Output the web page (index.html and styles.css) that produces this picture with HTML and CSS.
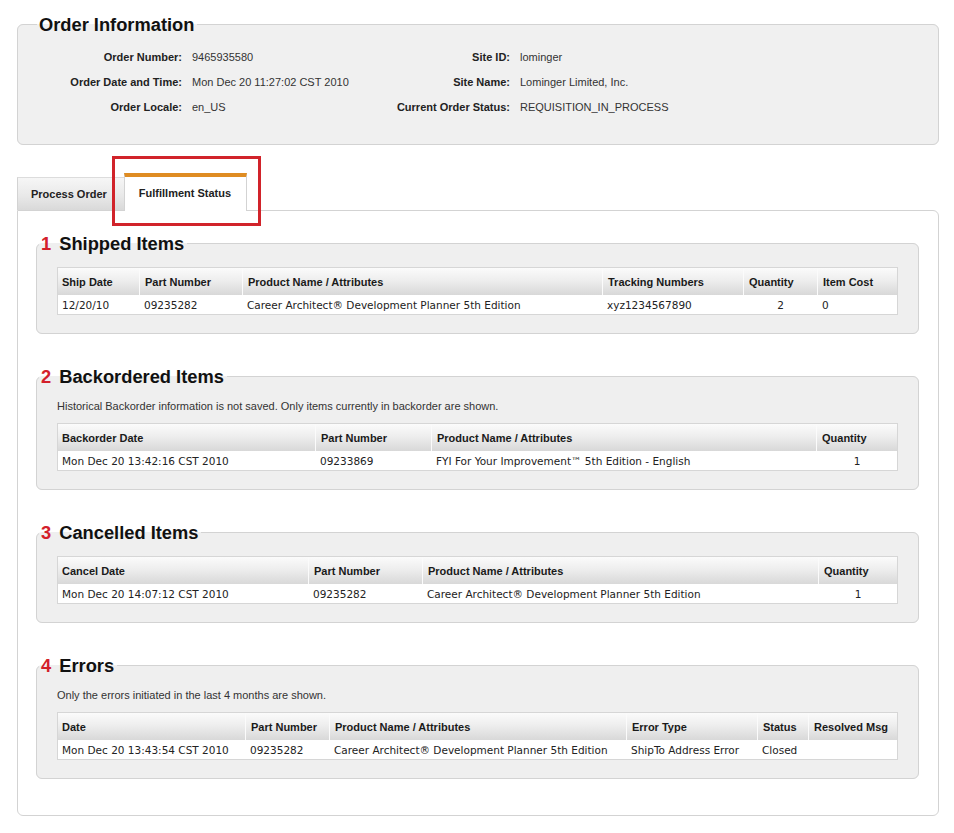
FILE: index.html
```html
<!DOCTYPE html>
<html lang="en">
<head>
<meta charset="utf-8">
<title>Order Fulfillment Status</title>
<link rel="stylesheet" href="styles.css">
</head>
<body>
<div class="page">
  <fieldset class="box order-info">
    <legend class="box-title order-title">Order Information</legend>
    <div class="info-grid">
      <div class="info-label">Order Number:</div>
      <div class="info-value">9465935580</div>
      <div class="info-label">Site ID:</div>
      <div class="info-value">lominger</div>

      <div class="info-label">Order Date and Time:</div>
      <div class="info-value">Mon Dec 20 11:27:02 CST 2010</div>
      <div class="info-label">Site Name:</div>
      <div class="info-value">Lominger Limited, Inc.</div>

      <div class="info-label">Order Locale:</div>
      <div class="info-value">en_US</div>
      <div class="info-label">Current Order Status:</div>
      <div class="info-value">REQUISITION_IN_PROCESS</div>
    </div>
  </fieldset>

  <div class="tabs">
    <div class="tab-bar">
      <div class="tab">Process Order</div>
      <div class="tab tab-active">Fulfillment Status</div>
    </div>
    <div class="annotation"></div>
    <div class="tab-panel">

      <fieldset class="box section">
        <legend class="box-title"><span class="num">1</span> Shipped Items</legend>
        <div class="section-body">
          <table class="grid t-shipped">
            <thead>
              <tr><th>Ship Date</th><th>Part Number</th><th>Product Name / Attributes</th><th>Tracking Numbers</th><th>Quantity</th><th>Item Cost</th></tr>
            </thead>
            <tbody>
              <tr><td>12/20/10</td><td>09235282</td><td>Career Architect® Development Planner 5th Edition</td><td>xyz1234567890</td><td class="qty">2</td><td>0</td></tr>
            </tbody>
          </table>
        </div>
      </fieldset>

      <fieldset class="box section">
        <legend class="box-title"><span class="num">2</span> Backordered Items</legend>
        <div class="section-body">
          <p class="note">Historical Backorder information is not saved. Only items currently in backorder are shown.</p>
          <table class="grid t-back">
            <thead>
              <tr><th>Backorder Date</th><th>Part Number</th><th>Product Name / Attributes</th><th>Quantity</th></tr>
            </thead>
            <tbody>
              <tr><td>Mon Dec 20 13:42:16 CST 2010</td><td>09233869</td><td>FYI For Your Improvement™ 5th Edition - English</td><td class="qty">1</td></tr>
            </tbody>
          </table>
        </div>
      </fieldset>

      <fieldset class="box section">
        <legend class="box-title"><span class="num">3</span> Cancelled Items</legend>
        <div class="section-body">
          <table class="grid t-cancel">
            <thead>
              <tr><th>Cancel Date</th><th>Part Number</th><th>Product Name / Attributes</th><th>Quantity</th></tr>
            </thead>
            <tbody>
              <tr><td>Mon Dec 20 14:07:12 CST 2010</td><td>09235282</td><td>Career Architect® Development Planner 5th Edition</td><td class="qty">1</td></tr>
            </tbody>
          </table>
        </div>
      </fieldset>

      <fieldset class="box section">
        <legend class="box-title"><span class="num">4</span> Errors</legend>
        <div class="section-body">
          <p class="note">Only the errors initiated in the last 4 months are shown.</p>
          <table class="grid t-errors">
            <thead>
              <tr><th>Date</th><th>Part Number</th><th>Product Name / Attributes</th><th>Error Type</th><th>Status</th><th>Resolved Msg</th></tr>
            </thead>
            <tbody>
              <tr><td>Mon Dec 20 13:43:54 CST 2010</td><td>09235282</td><td>Career Architect® Development Planner 5th Edition</td><td>ShipTo Address Error</td><td>Closed</td><td></td></tr>
            </tbody>
          </table>
        </div>
      </fieldset>

    </div>
  </div>
</div>
</body>
</html>
```

FILE: styles.css
```css
* { box-sizing: border-box; }

html, body {
  margin: 0;
  padding: 0;
  background: #ffffff;
}

body {
  font-family: "Liberation Sans", Arial, sans-serif;
  font-size: 11px;
  color: #222;
}

.page {
  padding: 14px 15px 0 17px;
  width: 954px;
}

/* Generic rounded fieldset box */
.box {
  margin: 0;
  padding: 0;
  min-width: 0;
  border: 1px solid #d3d3d3;
  border-radius: 6px;
  background: #efefef;
}

.box-title {
  font-size: 18.3px;
  font-weight: bold;
  line-height: 21px;
  color: #111;
  padding: 0 3px 0 2px;
  margin-left: 2px;
}

.order-info {
  background: #f0f0f0;
}

.order-title {
  margin-left: 19px;
}

.num {
  color: #d3202a;
  margin-right: 3px;
}

/* Order info grid */
.info-grid {
  display: grid;
  grid-template-columns: 164px 158px 150px 1fr;
  column-gap: 10px;
  padding: 10px 0 24px 0;
  line-height: 25px;
}

.info-label {
  font-weight: bold;
  text-align: right;
  color: #222;
}

.info-value {
  color: #333;
}

/* Tabs */
.tabs {
  position: relative;
  margin-top: 28px;
}

.tab-bar {
  display: flex;
  align-items: flex-end;
  height: 37px;
}

.tab {
  font-weight: bold;
  font-size: 11px;
  color: #222;
  white-space: nowrap;
}

.tab:first-child {
  height: 33px;
  line-height: 32px;
  padding: 0 17px 0 13px;
  border-top: 1px solid #dcdcdc;
  border-left: 1px solid #d3d3d3;
  background: linear-gradient(#f6f6f6, #e9e9e9 55%, #d9d9d9);
}

.tab-active {
  position: relative;
  z-index: 1;
  height: 38px;
  line-height: 33px;
  margin-bottom: -1px;
  padding: 0 15px 0 14px;
  background: #ffffff;
  border-top: 4px solid #df8c22;
  border-left: 1px solid #d3d3d3;
  border-right: 1px solid #d3d3d3;
}

.annotation {
  position: absolute;
  left: 95px;
  top: -17px;
  width: 149px;
  height: 70px;
  border: 3px solid #d1232a;
  z-index: 2;
  pointer-events: none;
}

.tab-panel {
  border: 1px solid #d3d3d3;
  border-radius: 0 6px 6px 6px;
  background: #ffffff;
  padding: 22px 19px 36px 18px;
  display: flex;
  flex-direction: column;
  gap: 32px;
}

.section-body {
  padding: 13px 20px 18px 20px;
}

.note {
  margin: 0 0 10px 0;
  line-height: 13px;
  color: #333;
}

/* Data grids */
.grid {
  width: 100%;
  table-layout: fixed;
  border-collapse: separate;
  border-spacing: 0;
  border: 1px solid #d6d6d6;
  background: #ffffff;
}

.grid th {
  height: 27px;
  padding: 0 4px 0 5px;
  text-align: left;
  font-weight: bold;
  font-size: 11px;
  color: #1a1a1a;
  white-space: nowrap;
  background: linear-gradient(#fbfbfb, #eeeeee 45%, #d8d8d8);
  border-left: 1px solid #fbfbfb;
}

.grid th:first-child {
  border-left: 0;
  padding-left: 4px;
}

.grid td {
  height: 19px;
  padding: 0 4px 0 5px;
  font-family: "DejaVu Sans", Verdana, sans-serif;
  font-size: 10.5px;
  color: #222;
  white-space: nowrap;
  background: #ffffff;
}

.grid td:first-child {
  padding-left: 4px;
}

.grid td.qty {
  text-align: center;
}

/* Column widths */
.t-shipped th:nth-child(1) { width: 81px; }
.t-shipped th:nth-child(2) { width: 103px; }
.t-shipped th:nth-child(3) { width: 360px; }
.t-shipped th:nth-child(4) { width: 141px; }
.t-shipped th:nth-child(5) { width: 74px; }

.t-back th:nth-child(1) { width: 257px; }
.t-back th:nth-child(2) { width: 116px; }
.t-back th:nth-child(3) { width: 385px; }

.t-cancel th:nth-child(1) { width: 250px; }
.t-cancel th:nth-child(2) { width: 114px; }
.t-cancel th:nth-child(3) { width: 396px; }

.t-errors th:nth-child(1) { width: 187px; }
.t-errors th:nth-child(2) { width: 84px; }
.t-errors th:nth-child(3) { width: 297px; }
.t-errors th:nth-child(4) { width: 131px; }
.t-errors th:nth-child(5) { width: 51px; }
```
